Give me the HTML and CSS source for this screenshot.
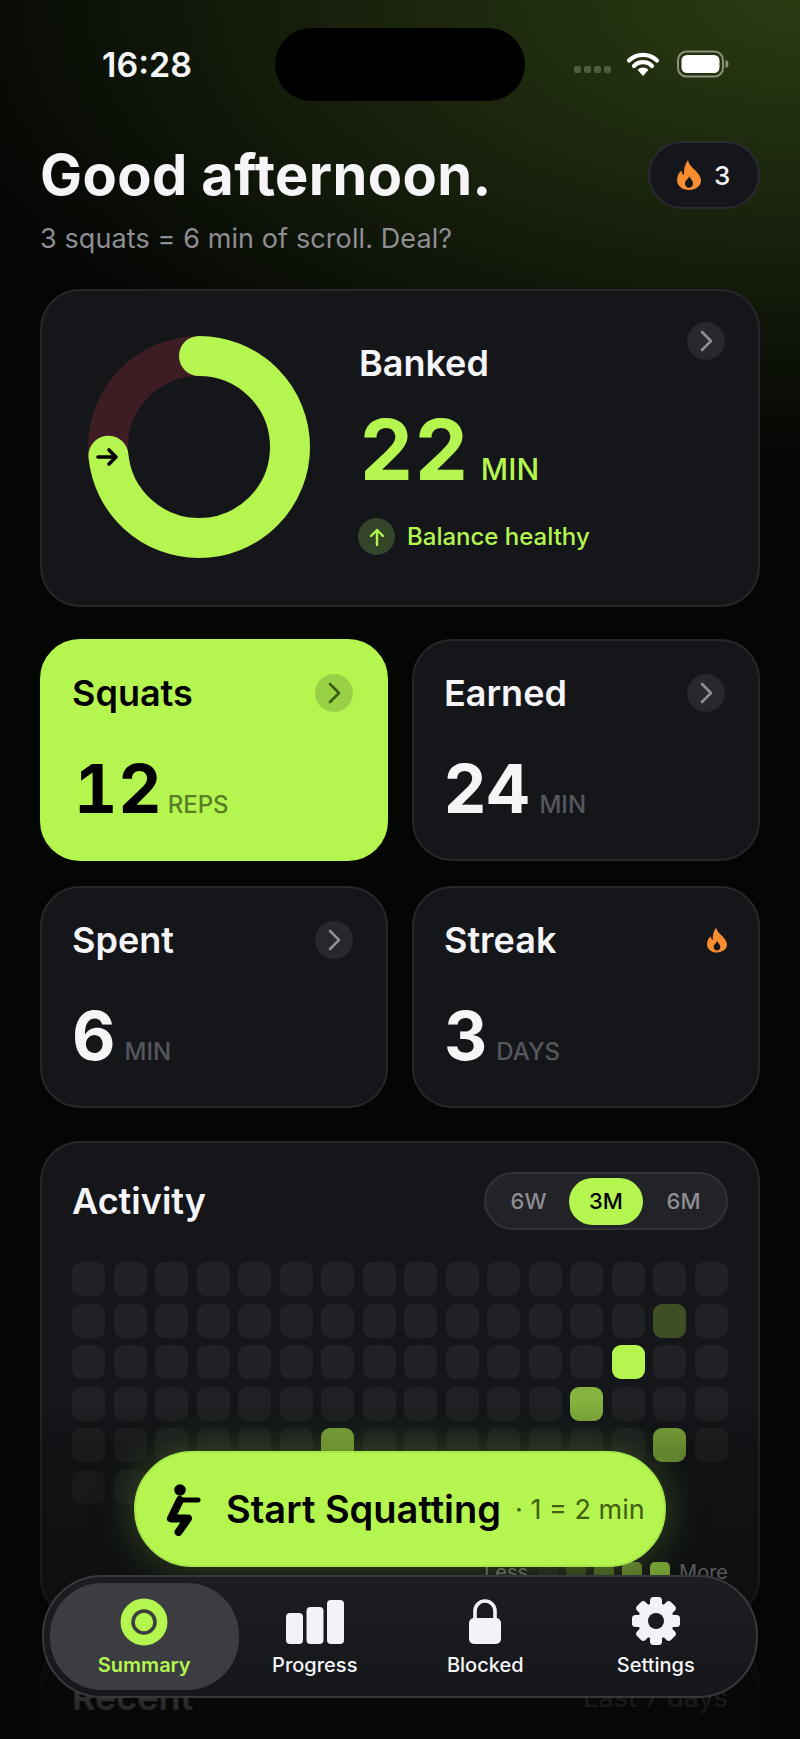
FILE: index.html
```html
<!DOCTYPE html>
<html lang="en">
<head>
  <meta charset="UTF-8" />
  <meta name="viewport" content="width=device-width, initial-scale=1.0"/>
  <title>Summary</title>
  <link rel="stylesheet" href="styles.css">
</head>
<body>
  <svg class="defs" width="0" height="0">
    <symbol id="flame" viewBox="0 0 24 30">
      <path fill="#f78d2e" d="M11 0c1 5 4 7 7 10 3 3 6 7 6 10.500C24 26 18.500 30 12 30S0 26 0 20c0-4 2-7.500 4.500-9.500.2 2 1 3.500 2.500 4.500C6.500 9 8 4 11 0Z"/>
      <path fill="#14161a" d="M12.300 16c-.3 2.800-4.300 3.800-4.300 7.500 0 2.600 1.900 4.200 4 4.200s4-1.600 4-4.200c0-3.200-3-4.800-3.700-7.500Z"/>
    </symbol>
    <symbol id="chevron" viewBox="0 0 38 38">
      <path d="M15 10l9 9-9 9" fill="none" stroke="currentColor" stroke-width="2.600" stroke-linecap="round" stroke-linejoin="round"/>
    </symbol>
  </svg>

  <div class="page">
    <div class="status">
      <span class="time">16:28</span>
      <div class="island"></div>
      <div class="status-icons">
        <div class="dots"><i></i><i></i><i></i><i></i></div>
        <svg class="wifi" width="34" height="26" viewBox="0 0 34 26">
          <path d="M3 9.500a20 20 0 0 1 28 0M8 15a12.500 12.500 0 0 1 18 0" fill="none" stroke="#fff" stroke-width="4.200" stroke-linecap="round"/>
          <path d="M17 25l-5.500-6.200a8 8 0 0 1 11 0Z" fill="#fff"/>
        </svg>
        <svg class="battery" width="52" height="28" viewBox="0 0 52 28">
          <rect x="1" y="1.500" width="45" height="25" rx="8.500" fill="none" stroke="#8a937b" stroke-width="2"/>
          <rect x="4.500" y="5" width="38" height="18" rx="5.500" fill="#fff"/>
          <path d="M48.500 10c2 .5 3 2 3 4s-1 3.500-3 4Z" fill="#8a937b"/>
        </svg>
      </div>
    </div>

    <header class="top">
      <div>
        <h1>Good afternoon.</h1>
        <p class="deal">3 squats = 6 min of scroll. Deal?</p>
      </div>
      <div class="streak-pill">
        <svg class="flame" width="24" height="30"><use href="#flame"/></svg>
        <span>3</span>
      </div>
    </header>

    <section class="card banked">
      <svg class="ring" width="224" height="224" viewBox="0 0 224 224">
        <circle cx="112" cy="112" r="91" fill="none" stroke="#3e1c24" stroke-width="40"/>
        <circle cx="112" cy="112" r="91" fill="none" stroke="#b4f64f" stroke-width="40" stroke-linecap="round" stroke-dasharray="419.300 571.800" transform="rotate(-90 112 112)"/>
        <path d="M11 122h18M22 115l7 7-7 7" fill="none" stroke="#000" stroke-width="3.600" stroke-linecap="round" stroke-linejoin="round"/>
      </svg>
      <div class="banked-info">
        <h2>Banked</h2>
        <div class="value big"><b>22</b><span>MIN</span></div>
        <div class="balance">
          <span class="up">
            <svg width="18" height="20" viewBox="0 0 18 20"><path d="M9 18V3M3 9l6-6 6 6" fill="none" stroke="#b4f64f" stroke-width="2.400" stroke-linecap="round" stroke-linejoin="round"/></svg>
          </span>
          Balance healthy
        </div>
      </div>
      <svg class="go go-corner" width="38" height="38"><use href="#chevron"/></svg>
    </section>

    <section class="stats">
      <div class="card stat lime">
        <div class="stat-head"><h2>Squats</h2><svg class="go" width="38" height="38"><use href="#chevron"/></svg></div>
        <div class="value"><b class="reps">12</b><span>REPS</span></div>
      </div>
      <div class="card stat">
        <div class="stat-head"><h2>Earned</h2><svg class="go" width="38" height="38"><use href="#chevron"/></svg></div>
        <div class="value"><b>24</b><span>MIN</span></div>
      </div>
      <div class="card stat">
        <div class="stat-head"><h2>Spent</h2><svg class="go" width="38" height="38"><use href="#chevron"/></svg></div>
        <div class="value"><b>6</b><span>MIN</span></div>
      </div>
      <div class="card stat">
        <div class="stat-head"><h2>Streak</h2><svg class="flame" width="20" height="26"><use href="#flame"/></svg></div>
        <div class="value"><b>3</b><span>DAYS</span></div>
      </div>
    </section>

    <section class="card activity">
      <div class="activity-head">
        <h2>Activity</h2>
        <div class="segment">
          <span>6W</span>
          <span class="on">3M</span>
          <span>6M</span>
        </div>
      </div>
      <div class="heat">
        <i></i><i></i><i></i><i></i><i></i><i></i><i></i><i></i><i></i><i></i><i></i><i></i><i></i><i></i><i></i><i></i>
        <i></i><i></i><i></i><i></i><i></i><i></i><i></i><i></i><i></i><i></i><i></i><i></i><i></i><i></i><i class="l1"></i><i></i>
        <i></i><i></i><i></i><i></i><i></i><i></i><i></i><i></i><i></i><i></i><i></i><i></i><i></i><i class="l3"></i><i></i><i></i>
        <i></i><i></i><i></i><i></i><i></i><i></i><i></i><i></i><i></i><i></i><i></i><i></i><i class="l2"></i><i></i><i></i><i></i>
        <i></i><i></i><i></i><i></i><i></i><i></i><i class="l2"></i><i></i><i></i><i></i><i></i><i></i><i></i><i></i><i class="l2"></i><i></i>
        <i></i><i></i><i></i><i></i><i></i><i></i><i></i><i></i><i></i><i></i>
      </div>
      <div class="legend">
        <span>Less</span>
        <i></i><i class="l1"></i><i class="l15"></i><i class="l2"></i><i class="l3"></i>
        <span>More</span>
      </div>
    </section>

    <section class="card recent">
      <h2>Recent</h2>
      <span>Last 7 days</span>
    </section>
  </div>

  <div class="fade"></div>

  <button class="cta">
    <svg width="38" height="54" viewBox="0 0 38 54">
      <circle cx="17" cy="8" r="5.800" fill="#000"/>
      <path d="M17 18L8 36.500H25L15.500 50" fill="none" stroke="#000" stroke-width="8" stroke-linecap="round" stroke-linejoin="round"/>
      <path d="M17 18H35" fill="none" stroke="#000" stroke-width="5" stroke-linecap="round"/>
    </svg>
    <strong>Start Squatting</strong>
    <span>· 1 = 2 min</span>
  </button>

  <nav class="tabs">
    <div class="tab active">
      <svg width="48" height="48" viewBox="0 0 48 48">
        <circle cx="24" cy="24" r="23.500" fill="#b4f64f"/>
        <circle cx="24" cy="24" r="11" fill="none" stroke="#3c3d40" stroke-width="3.600"/>
      </svg>
      Summary
    </div>
    <div class="tab">
      <svg width="58" height="48" viewBox="0 0 58 48">
        <rect x="0" y="15" width="17" height="31" rx="4" fill="#f2f2f7"/>
        <rect x="20.500" y="9" width="17" height="37" rx="4" fill="#f2f2f7"/>
        <rect x="41" y="2" width="17" height="44" rx="4" fill="#f2f2f7"/>
      </svg>
      Progress
    </div>
    <div class="tab">
      <svg width="34" height="48" viewBox="0 0 34 48">
        <path d="M7 22V13a10 10 0 0 1 20 0v9" fill="none" stroke="#f2f2f7" stroke-width="3.600"/>
        <rect x="1" y="20" width="32" height="26" rx="5" fill="#f2f2f7"/>
      </svg>
      Blocked
    </div>
    <div class="tab">
      <svg width="50" height="50" viewBox="0 0 50 50">
        <g fill="#f2f2f7">
          <rect x="19" y="1" width="12" height="48" rx="3.500"/>
          <rect x="19" y="1" width="12" height="48" rx="3.500" transform="rotate(45 25 25)"/>
          <rect x="19" y="1" width="12" height="48" rx="3.500" transform="rotate(90 25 25)"/>
          <rect x="19" y="1" width="12" height="48" rx="3.500" transform="rotate(135 25 25)"/>
          <circle cx="25" cy="25" r="18"/>
        </g>
        <circle cx="25" cy="25" r="8" fill="#1a1b1e"/>
      </svg>
      Settings
    </div>
  </nav>
</body>
</html>
```

FILE: styles.css
```css
:root {
  --lime: #b4f64f;
  --card: #14161a;
  --line: #25272b;
  --grey: #8e8e93;
  --white: #f5f5f8;
}
* { box-sizing: border-box; margin: 0; padding: 0; }
html, body { height: 1739px; overflow: hidden; }
body {
  position: relative;
  font-family: Inter, 'Noto Sans', sans-serif;
  color: var(--white);
  background:
    radial-gradient(ellipse 900px 460px at 100% 0, #2b3b12 0%, rgba(34, 48, 16, 0.72) 45%, rgba(10, 14, 6, 0) 100%),
    #040604;
}
.defs { position: absolute; }
.page { padding: 28px 40px 0; }

.status { display: flex; align-items: center; height: 73px; }
.time { width: 235px; padding-left: 62px; font-size: 34px; font-weight: 600; }
.island { width: 250px; height: 73px; background: #000; border-radius: 37px; }
.status-icons { display: flex; align-items: center; margin-left: 49px; }
.dots { display: flex; gap: 3px; margin-top: 9px; }
.dots i { width: 7px; height: 7px; border-radius: 2px; background: #505c40; }
.wifi { margin-left: 15px; margin-top: -2px; }
.battery { margin-left: 17px; margin-top: -1px; }

.top { display: flex; justify-content: space-between; margin-top: 40px; height: 148px; }
h1 { font-size: 56px; font-weight: 700; line-height: 68px; letter-spacing: 0.4px; }
.deal { margin-top: 13px; font-size: 27px; line-height: 34px; letter-spacing: 0.1px; color: var(--grey); }
.streak-pill {
  display: flex; align-items: center; gap: 13px;
  width: 112px; height: 68px; padding-left: 27px;
  background: #14161c; border: 2px solid #282b2f; border-radius: 34px;
  font-size: 26px; font-weight: 500;
}

.card {
  position: relative;
  background: var(--card);
  border: 2px solid var(--line);
  border-radius: 40px;
}
h2 { font-size: 36px; font-weight: 600; line-height: 42px; }
.go { color: var(--grey); background: #26282c; border-radius: 50%; }
.go-corner { position: absolute; top: 31px; right: 33px; }

.banked { display: flex; height: 318px; padding: 44px 0 0 45px; }
.ring { flex: none; }
.banked-info { margin-left: 48px; margin-top: 7px; }
.value { display: flex; align-items: baseline; gap: 9px; }
.value b { font-size: 67px; font-weight: 700; line-height: 80px; }
.value span { font-size: 24px; font-weight: 500; color: #56575d; }
.value b.reps { font-variant-numeric: tabular-nums; letter-spacing: 1px; margin: 0 -4px 0 2px; }
.big { margin-top: 15px; gap: 11px; color: var(--lime); }
.big b { font-size: 84px; line-height: 102px; letter-spacing: 2px; margin-left: 1px; }
.big span { font-size: 30px; color: var(--lime); }
.balance {
  display: flex; align-items: center; gap: 12px;
  margin-top: 17px;
  font-size: 24px; font-weight: 500; color: var(--lime);
}
.up {
  display: flex; align-items: center; justify-content: center;
  width: 37px; height: 37px; margin-left: -1px;
  background: #34452a; border-radius: 50%;
}

.stats {
  display: grid; grid-template-columns: 348px 348px; grid-auto-rows: 222px;
  gap: 25px 24px; margin-top: 32px;
}
.stat { padding: 33px 33px 0 30px; }
.stat-head { display: flex; justify-content: space-between; align-items: center; height: 38px; }
.stat .value { margin-top: 37px; }
.stat .flame { margin-right: -2px; }
.lime { background: var(--lime); border-color: var(--lime); color: #000; }
.lime .go { background: #98d145; color: #3c5a10; }
.lime .value span { color: #5a7e26; }

.activity { height: 478px; margin-top: 33px; padding: 29px 30px 0; }
.activity-head { display: flex; justify-content: space-between; align-items: center; height: 58px; }
.segment {
  display: flex; align-items: center;
  width: 244px; height: 58px; padding: 0 4px;
  background: #212327; border: 2px solid #303236; border-radius: 29px;
  font-size: 22px; font-weight: 500; color: var(--grey);
}
.segment span { flex: 1; text-align: center; line-height: 47px; }
.segment .on { flex: none; width: 74px; margin: 0 2px; background: var(--lime); color: #000; border-radius: 24px; }
.heat {
  display: grid; grid-template-columns: repeat(16, 33px); grid-auto-rows: 34px;
  gap: 7.600px 8.530px; margin-top: 32px;
}
.heat i, .legend i { background: #1f2124; border-radius: 9px; }
.heat .l1, .legend .l1 { background: #3e4f24; }
.heat .l2, .legend .l2 { background: #86b33f; }
.heat .l3, .legend .l3 { background: var(--lime); }
.legend .l15 { background: #5e7d30; }
.legend {
  display: flex; align-items: center; justify-content: flex-end; gap: 8px;
  margin-top: 56px;
  font-size: 20px; color: var(--grey);
}
.legend i { width: 20px; height: 20px; border-radius: 5px; }
.legend span:first-child { margin-right: 2px; }
.legend span:last-child { margin-left: 1px; }

.recent {
  display: flex; justify-content: space-between; align-items: center;
  height: 140px; margin-top: 24px; padding: 0 30px 32px;
}
.recent span { font-size: 27px; color: var(--grey); }

/* content dims out under the floating bar */
.fade {
  position: absolute; left: 0; right: 0; top: 1400px; height: 339px;
  background: linear-gradient(rgba(4, 6, 4, 0), rgba(4, 6, 4, 0.28) 15%, rgba(4, 6, 4, 0.38) 50%, rgba(4, 6, 4, 0.85) 90%);
}

.cta {
  position: absolute; left: 134px; top: 1451px;
  display: flex; align-items: center;
  width: 532px; height: 116px; padding-left: 27px;
  background: var(--lime); border: 2px solid #a8e84a; border-radius: 58px;
  box-shadow: 0 0 40px rgba(180, 246, 79, 0.25);
  font-family: inherit; color: #000;
}
.cta strong { margin-left: 25px; font-size: 38px; font-weight: 600; }
.cta span { margin-left: 14px; font-size: 27px; color: #42600f; }

.tabs {
  position: absolute; left: 42px; top: 1575px;
  display: grid; grid-template-columns: repeat(4, 1fr);
  width: 716px; height: 123px; padding: 6px 15px;
  background: linear-gradient(#1c1d20, #16171a);
  border: 2px solid #37383b; border-radius: 60px;
}
.tab {
  display: flex; flex-direction: column; align-items: center; justify-content: flex-end; gap: 7px;
  padding-bottom: 13px;
  font-size: 20px; font-weight: 500; color: var(--white);
}
.tab.active { margin: 0 -9px; background: #3c3d40; border-radius: 52px; color: var(--lime); font-weight: 600; }
```
